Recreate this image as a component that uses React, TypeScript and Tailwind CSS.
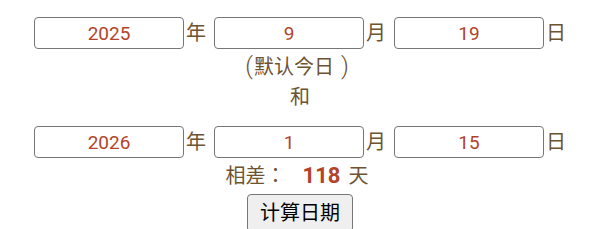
const FONT = "font-['Roboto','Noto_Sans_CJK_TC',sans-serif]"

function DateRow({ y, m, d }: { y: string; m: string; d: string }) {
  const box =
    'w-[150px] h-[32px] rounded-[4px] border border-[#767676] bg-white text-center text-[19px] text-[#b3432a] outline-none'
  return (
    <div className="flex items-center justify-center h-[36px]">
      <input className={box} defaultValue={y} />
      <span className="ml-[2px] mr-[8px] text-[20px]">年</span>
      <input className={box} defaultValue={m} />
      <span className="ml-[2px] mr-[8px] text-[20px]">月</span>
      <input className={box} defaultValue={d} />
      <span className="ml-[2px] text-[20px]">日</span>
    </div>
  )
}

export default function App() {
  return (
    <div className={`${FONT} w-[600px] h-[229px] overflow-hidden bg-white text-[#6e5333] pt-[15px] text-center`}>
      <DateRow y="2025" m="9" d="19" />
      <div className="flex justify-center items-baseline h-[31px] leading-[31px] pr-[6px]">
        <span className="mr-[1px] text-[24px] font-light">(</span>
        <span className="text-[20px]">默认今日</span>
        <span className="ml-[7px] text-[24px] font-light">)</span>
      </div>
      <div className="text-[20px] leading-[31px]">和</div>
      <div className="mt-[11px]">
        <DateRow y="2026" m="1" d="15" />
      </div>
      <div className="flex justify-center items-baseline text-[20px] leading-[31px] pr-[6px]">
        <span>相差：</span>
        <span className="ml-[17px] text-[22px] font-bold text-[#b3432a]">118</span>
        <span className="ml-[8px]">天</span>
      </div>
      <div className="mt-[2px] flex justify-center">
        <button className="h-[38px] px-[12px] rounded-[4px] border border-[#767676] bg-[#efefef] text-[20px] text-black">
          计算日期
        </button>
      </div>
    </div>
  )
}
